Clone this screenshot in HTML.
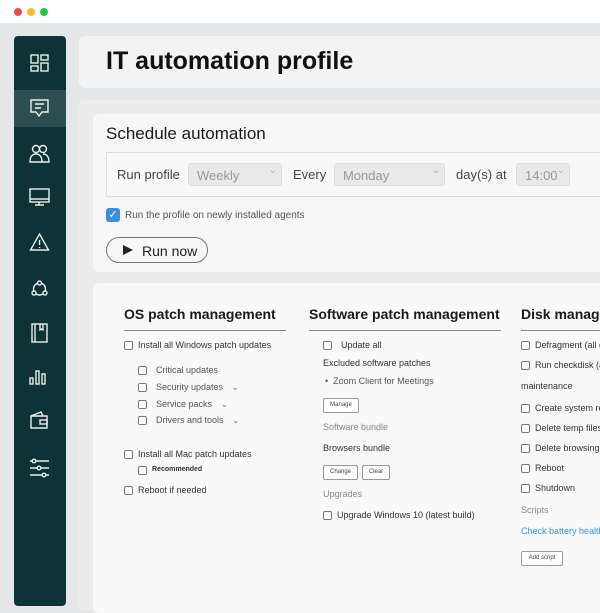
<!DOCTYPE html>
<html><head><style>
*{margin:0;padding:0;box-sizing:border-box}
body{width:600px;height:600px;overflow:hidden;background:#e6e7e8;font-family:"Liberation Sans",sans-serif;position:relative;color:#222}
.top{position:absolute;left:0;top:0;width:600px;height:23px;background:#fff}
.dot{position:absolute;top:8px;width:8px;height:8px;border-radius:50%}
.side{position:absolute;left:14px;top:36px;width:52px;height:570px;background:#0d3337;border-radius:4px}
.act{position:absolute;left:14px;top:90px;width:52px;height:37px;background:#2d4e50}
.hdr{position:absolute;left:79px;top:36px;width:530px;height:52px;background:#f3f3f4;border-radius:6px}
.hdr h1{position:absolute;left:27px;top:11px;font-size:25px;font-weight:bold;color:#111}
.main{position:absolute;left:79px;top:100px;width:530px;height:510px;background:#ececed;border-radius:6px}
.sch{position:absolute;left:93px;top:114px;width:520px;height:158px;background:#f7f7f8;border-radius:6px}
.sch h2{position:absolute;left:13px;top:10px;font-size:17px;font-weight:normal;color:#1b1b1b}
.row{position:absolute;left:13px;top:38px;width:520px;height:45px;border:1px solid #dcdcdc;border-right:none;background:#f8f8f9}
.lbl{position:absolute;top:14px;font-size:13px;color:#444}
.sel{position:absolute;top:10px;height:23px;background:#e9e9e9;border:1px solid #ddd;border-radius:3px;color:#999;font-size:13px;padding:4px 8px}
.sel:after{content:"⌄";position:absolute;right:4px;top:1px;font-size:10px;color:#aaa}
.chk{position:absolute;left:13px;top:94px;width:14px;height:14px;background:#3b8fe0;border-radius:3px;color:#fff;font-size:11px;text-align:center;line-height:14px}
.btn{position:absolute;left:13px;top:123px;width:102px;height:26px;border:1px solid #777;border-radius:13px;font-size:14px;padding:5px 0 0 35px}
.btn:before{content:"";position:absolute;left:16px;top:7px;border-left:10px solid #222;border-top:5.5px solid transparent;border-bottom:5.5px solid transparent}
.con{position:absolute;left:93px;top:283px;width:520px;height:330px;background:#f9f9fa;border-radius:6px}
.t{position:absolute;font-size:9px;color:#333;white-space:nowrap}
.h{position:absolute;font-size:14px;font-weight:bold;color:#1a1a1a;white-space:nowrap}
.ln{position:absolute;height:1px;background:#888}
.cb{position:absolute;width:9px;height:9px;border:1px solid #777;border-radius:2px;background:#fff}
.g{color:#888}
.sb{position:absolute;height:15px;border:1px solid #999;border-radius:2px;font-size:6px;color:#444;text-align:center;line-height:13px;background:#fff}
.v{font-size:9px;color:#777;margin-left:6px}
</style></head><body>
<div class="top"></div>
<div class="dot" style="left:14px;background:#ee4c4a"></div>
<div class="dot" style="left:27px;background:#f5bd30"></div>
<div class="dot" style="left:40px;background:#2bbf4d"></div>
<div class="side"></div><div class="act"></div>
<svg style="position:absolute;left:0;top:0" width="80" height="600" fill="none" stroke="#e9eeee" stroke-width="1.4">
<rect x="31" y="55" width="7" height="8"/><rect x="41" y="55" width="7" height="5"/><rect x="31" y="66" width="7" height="5"/><rect x="41" y="63" width="7" height="8"/>
<path d="M31 100h17v12h-6l-3 4-3-4h-5z"/><path d="M35 104h9M35 108h6"/>
<circle cx="36" cy="149" r="3.5"/><circle cx="43" cy="149" r="3.5"/><path d="M30 162c0-6 3-8 6-8s6 2 6 8zM40 162h9c0-6-3-8-6-8"/>
<rect x="30" y="189" width="19" height="13"/><path d="M30 199h19M39 202v3M35 205h9"/>
<path d="M39.5 234l9 16h-18z"/><path d="M39.5 240v5M39.5 247v1"/>
<circle cx="39.5" cy="289" r="6"/><circle cx="39.5" cy="283" r="2" fill="#0d3337"/><circle cx="34" cy="293" r="2" fill="#0d3337"/><circle cx="45" cy="293" r="2" fill="#0d3337"/>
<rect x="32" y="324" width="15" height="18"/><path d="M35 324v18M40 324v6l1.5-1 1.5 1v-6"/>
<rect x="30" y="378" width="3" height="6"/><rect x="36" y="371" width="3" height="13"/><rect x="42" y="374" width="3" height="10"/>
<path d="M31 416h16v12H31zM31 416l10-4 2 4"/><rect x="40" y="420" width="7" height="4"/>
<path d="M30 461h19M30 468h19M30 475h19"/><circle cx="34" cy="461" r="1.8" fill="#0d3337"/><circle cx="39" cy="468" r="1.8" fill="#0d3337"/><circle cx="44" cy="475" r="1.8" fill="#0d3337"/>
</svg>
<div class="hdr"><h1>IT automation profile</h1></div>
<div class="main"></div>
<div class="sch"><h2>Schedule automation</h2>
<div class="row">
<span class="lbl" style="left:10px">Run profile</span>
<div class="sel" style="left:81px;width:94px">Weekly</div>
<span class="lbl" style="left:186px">Every</span>
<div class="sel" style="left:227px;width:111px">Monday</div>
<span class="lbl" style="left:349px">day(s) at</span>
<div class="sel" style="left:409px;width:54px">14:00</div>
</div>
<div class="chk">✓</div>
<span class="t" style="left:32px;top:96px;font-size:10px;color:#555">Run the profile on newly installed agents</span>
<div class="btn">Run now</div>
</div>
<div class="con"></div>
<div class="h" style="left:124px;top:306px">OS patch management</div>
<div class="ln" style="left:124px;top:330px;width:162px"></div>
<div class="cb" style="left:124px;top:341px"></div><span class="t" style="left:138px;top:340px">Install all Windows patch updates</span>
<div class="cb" style="left:138px;top:366px"></div><span class="t" style="left:156px;top:365px;color:#555">Critical updates</span>
<div class="cb" style="left:138px;top:383px"></div><span class="t" style="left:156px;top:382px;color:#555">Security updates <span class="v">⌄</span></span>
<div class="cb" style="left:138px;top:400px"></div><span class="t" style="left:156px;top:399px;color:#555">Service packs <span class="v">⌄</span></span>
<div class="cb" style="left:138px;top:416px"></div><span class="t" style="left:156px;top:415px;color:#555">Drivers and tools <span class="v">⌄</span></span>
<div class="cb" style="left:124px;top:450px"></div><span class="t" style="left:138px;top:449px">Install all Mac patch updates</span>
<div class="cb" style="left:138px;top:466px"></div><span class="t" style="left:152px;top:466px;font-size:7px;font-weight:bold">Recommended</span>
<div class="cb" style="left:124px;top:486px"></div><span class="t" style="left:138px;top:485px">Reboot if needed</span>
<div class="h" style="left:309px;top:306px">Software patch management</div>
<div class="ln" style="left:309px;top:330px;width:192px"></div>
<div class="cb" style="left:323px;top:341px"></div><span class="t" style="left:341px;top:340px">Update all</span>
<span class="t" style="left:323px;top:358px">Excluded software patches</span>
<span class="t" style="left:325px;top:376px;color:#555">•&nbsp; Zoom Client for Meetings</span>
<div class="sb" style="left:323px;top:398px;width:36px">Manage</div>
<span class="t g" style="left:323px;top:422px">Software bundle</span>
<span class="t" style="left:323px;top:443px">Browsers bundle</span>
<div class="sb" style="left:323px;top:465px;width:35px">Change</div>
<div class="sb" style="left:362px;top:465px;width:28px">Clear</div>
<span class="t g" style="left:323px;top:489px">Upgrades</span>
<div class="cb" style="left:323px;top:511px"></div><span class="t" style="left:337px;top:510px">Upgrade Windows 10 (latest build)</span>
<div class="h" style="left:521px;top:306px">Disk management</div>
<div class="ln" style="left:521px;top:330px;width:90px"></div>
<div class="cb" style="left:521px;top:341px"></div><span class="t" style="left:535px;top:340px">Defragment (all drives)</span>
<div class="cb" style="left:521px;top:361px"></div><span class="t" style="left:535px;top:360px">Run checkdisk (all)</span>
<span class="t" style="left:521px;top:381px">maintenance</span>
<div class="cb" style="left:521px;top:404px"></div><span class="t" style="left:535px;top:403px">Create system restore</span>
<div class="cb" style="left:521px;top:424px"></div><span class="t" style="left:535px;top:423px">Delete temp files</span>
<div class="cb" style="left:521px;top:444px"></div><span class="t" style="left:535px;top:443px">Delete browsing history</span>
<div class="cb" style="left:521px;top:464px"></div><span class="t" style="left:535px;top:463px">Reboot</span>
<div class="cb" style="left:521px;top:484px"></div><span class="t" style="left:535px;top:483px">Shutdown</span>
<span class="t g" style="left:521px;top:505px">Scripts</span>
<span class="t" style="left:521px;top:526px;color:#3a94d6">Check battery health</span>
<div class="sb" style="left:521px;top:551px;width:42px">Add script</div>
</body></html>
